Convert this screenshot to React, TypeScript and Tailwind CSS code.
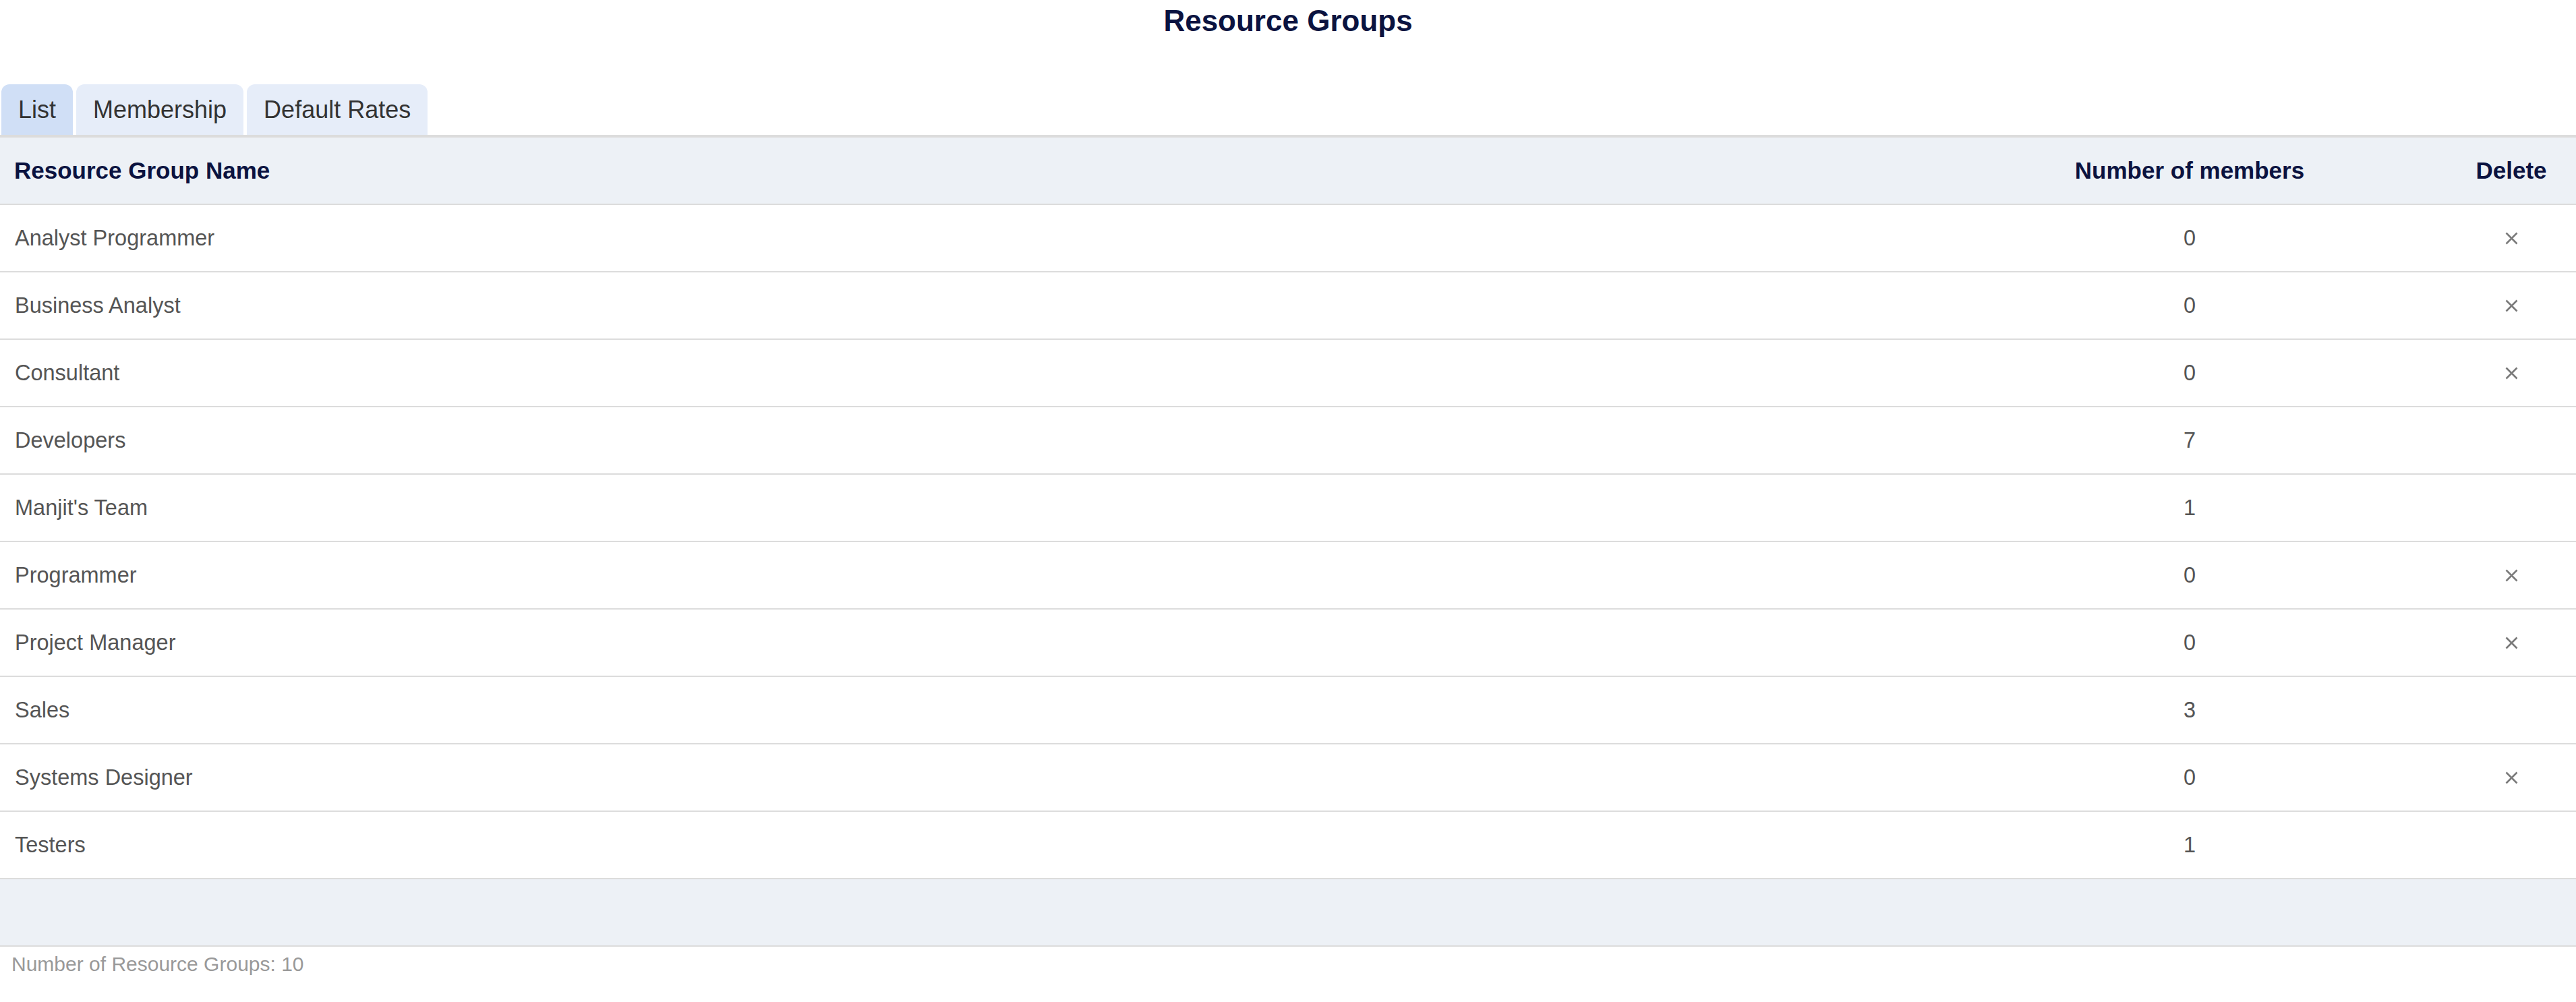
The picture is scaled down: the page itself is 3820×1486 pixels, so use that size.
import React from "react";

type Group = { name: string; members: number };

const groups: Group[] = [
  { name: "Analyst Programmer", members: 0 },
  { name: "Business Analyst", members: 0 },
  { name: "Consultant", members: 0 },
  { name: "Developers", members: 7 },
  { name: "Manjit's Team", members: 1 },
  { name: "Programmer", members: 0 },
  { name: "Project Manager", members: 0 },
  { name: "Sales", members: 3 },
  { name: "Systems Designer", members: 0 },
  { name: "Testers", members: 1 },
];

function DeleteIcon() {
  return (
    <svg width="19" height="19" viewBox="0 0 19 19" className="inline-block">
      <path d="M1.5 1.5 L17.5 17.5 M17.5 1.5 L1.5 17.5" stroke="#7a7a7a" strokeWidth="2.6" strokeLinecap="butt" />
    </svg>
  );
}

const tabs = [
  { label: "List", active: true },
  { label: "Membership", active: false },
  { label: "Default Rates", active: false },
];

export default function App() {
  return (
    <div className="w-[3820px] h-[1486px] bg-white font-['Liberation_Sans',Arial,sans-serif]">
      <h1 className="h-[61px] leading-[61px] text-center text-[44px] font-bold text-[#0b1340]">
        Resource Groups
      </h1>

      <div className="mt-[64px] flex items-end gap-[5px] pl-[2px] border-b-4 border-[#dcdcdc]">
        {tabs.map((t) => (
          <div
            key={t.label}
            className={
              t.active
                ? "h-[75px] px-[25px] flex items-center rounded-t-[12px] bg-[#d0dff6] text-[36px] text-[#333333]"
                : "h-[75px] px-[25px] flex items-center rounded-t-[12px] bg-[#e6edf9] text-[36px] text-[#333333]"
            }
          >
            {t.label}
          </div>
        ))}
      </div>

      <div className="grid grid-cols-[1fr_762px_192px] items-center h-[100px] bg-[#edf1f6] border-b-2 border-[#dcdcdc] text-[35px] font-bold text-[#0b1340]">
        <div className="pl-[21px]">Resource Group Name</div>
        <div className="text-center">Number of members</div>
        <div className="text-center">Delete</div>
      </div>

      {groups.map((g) => (
        <div
          key={g.name}
          className="grid grid-cols-[1fr_762px_192px] items-center h-[100px] border-b-2 border-[#dcdcdc] text-[32.5px] text-[#555555]"
        >
          <div className="pl-[22px]">{g.name}</div>
          <div className="text-center">{g.members}</div>
          <div className="flex justify-center">{g.members === 0 ? <DeleteIcon /> : null}</div>
        </div>
      ))}

      <div className="h-[100px] bg-[#edf1f6] border-b-2 border-[#dcdcdc]" />

      <div className="h-[52px] leading-[52px] pl-[17px] text-[30px] text-[#999999]">
        Number of Resource Groups: 10
      </div>
    </div>
  );
}
